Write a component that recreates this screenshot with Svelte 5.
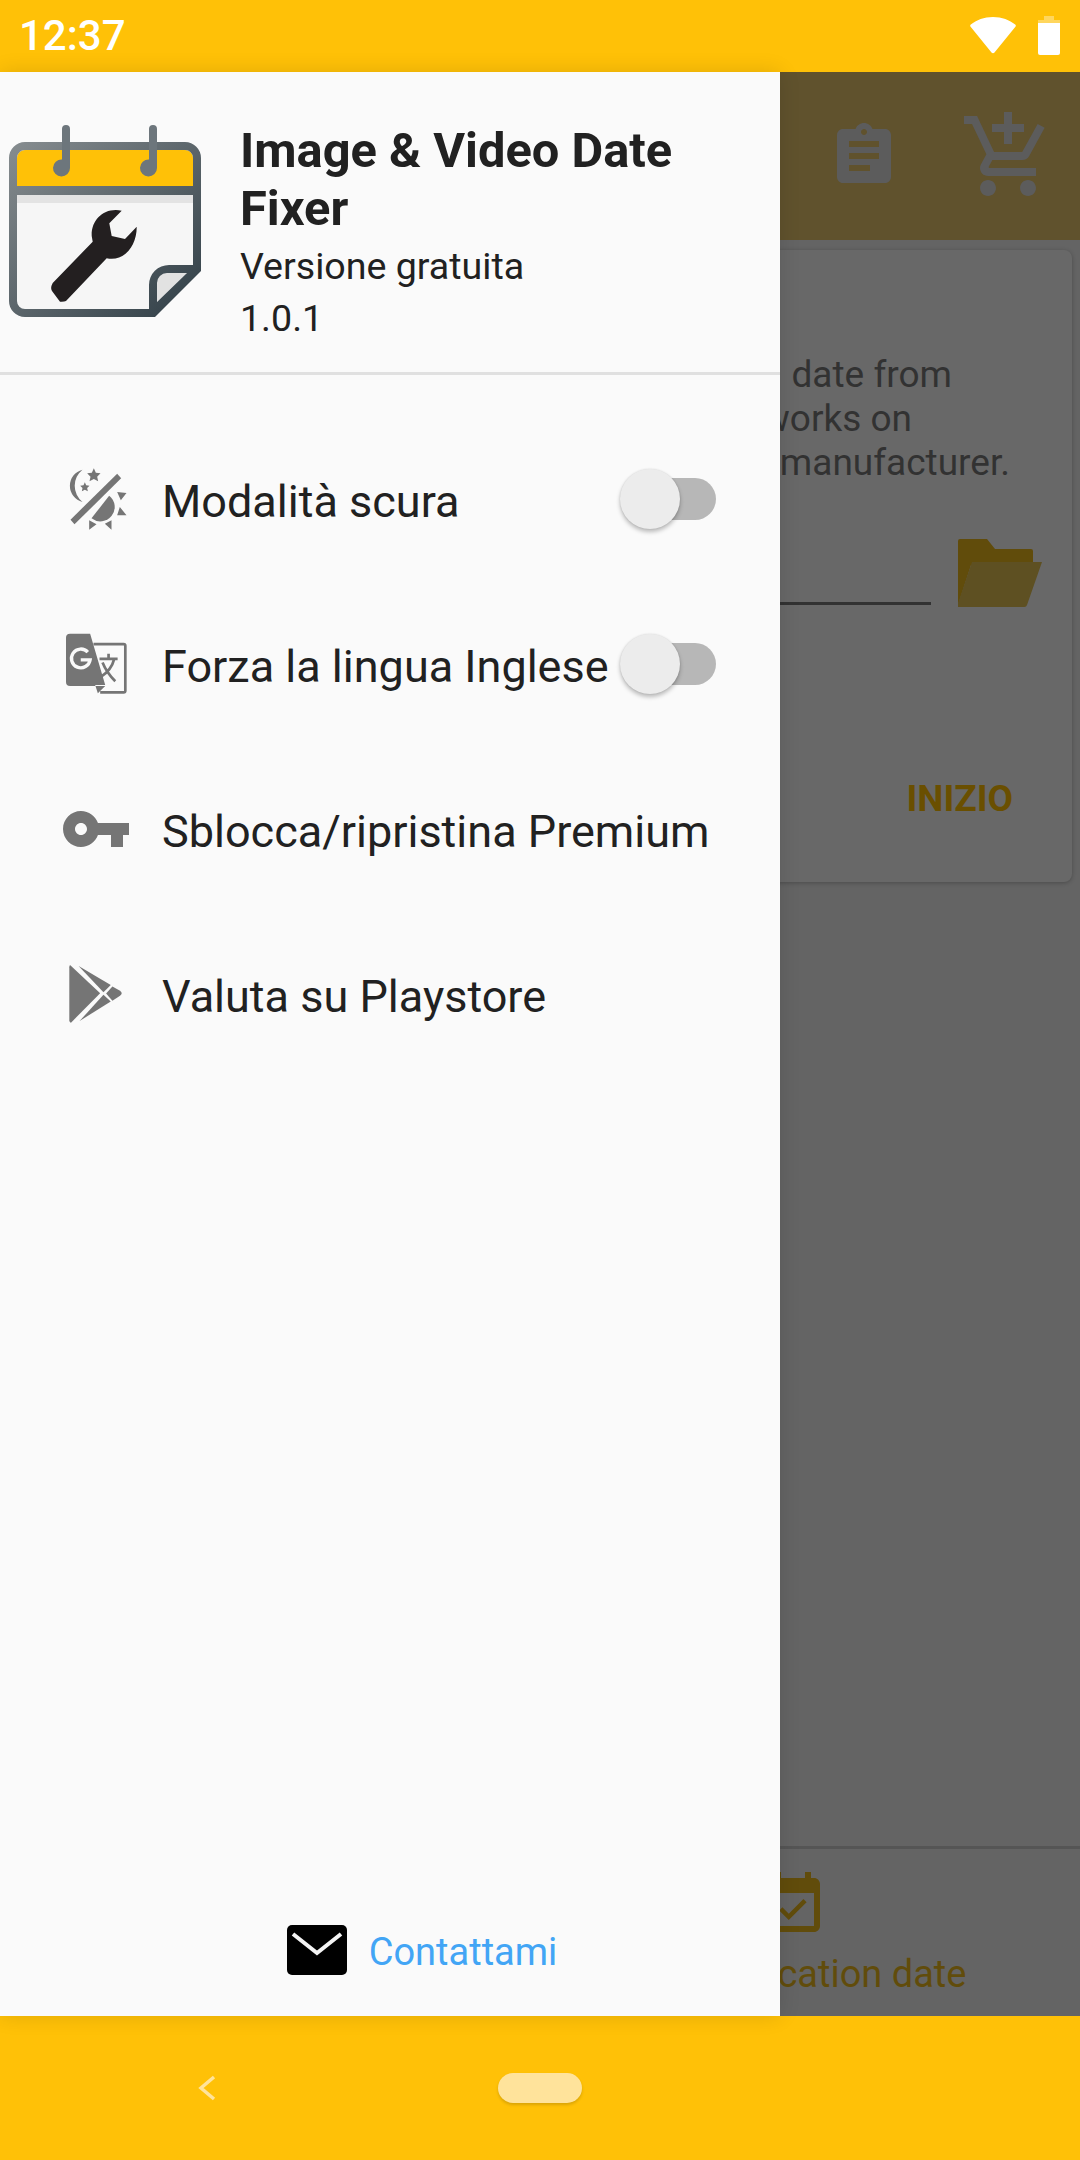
<script>
  const rows = [
    { label: 'Modalità scura', icon: 'moon', toggle: true },
    { label: 'Forza la lingua Inglese', icon: 'translate', toggle: true },
    { label: 'Sblocca/ripristina Premium', icon: 'key', toggle: false },
    { label: 'Valuta su Playstore', icon: 'play', toggle: false }
  ];
</script>

<div class="screen">
  <header class="status">
    <span class="time">12:37</span>
    <div class="status-icons">
      <svg class="wifi" viewBox="0 0 46 37" aria-hidden="true"><path d="M23 0C14 0 6.500 3 .8 7.500 0 8.300 0 9 .6 9.800L21.500 35.500c.8 1 2.200 1 3 0L45.400 9.800c.6-.8.6-1.500-.2-2.300C39.500 3 32 0 23 0z" fill="#fff"/></svg>
      <svg class="battery" viewBox="0 0 22 39" aria-hidden="true"><path d="M6 0h10v4h6v4H0V4h6z" fill="#fff" opacity=".35"/><path d="M0 7h22v30a2 2 0 0 1-2 2H2a2 2 0 0 1-2-2z" fill="#fff"/></svg>
    </div>
  </header>

  <main class="main">
    <div class="app">
      <div class="toolbar">
        <svg class="tool" viewBox="0 0 24 24" aria-hidden="true"><path d="M19 3h-4.180C14.400 1.840 13.300 1 12 1c-1.300 0-2.400.84-2.820 2H5c-1.100 0-2 .9-2 2v14c0 1.100.9 2 2 2h14c1.100 0 2-.9 2-2V5c0-1.100-.9-2-2-2zm-7 0c.55 0 1 .45 1 1s-.45 1-1 1-1-.45-1-1 .45-1 1-1zm2 14H7v-2h7v2zm3-4H7v-2h10v2zm0-4H7V7h10v2z"/></svg>
        <svg class="tool cart" viewBox="0 0 24 24" aria-hidden="true"><path d="M11 9h2V6h3V4h-3V1h-2v3H8v2h3v3zm-4 9c-1.100 0-1.990.9-1.990 2S5.900 22 7 22s2-.9 2-2-.9-2-2-2zm10 0c-1.100 0-1.990.9-1.990 2s.89 2 1.990 2 2-.9 2-2-.9-2-2-2zm-9.830-3.250l.03-.12.9-1.630h7.450c.75 0 1.410-.41 1.750-1.030l3.860-7.010L19.420 4h-.01l-1.100 2-2.760 5H8.530l-.13-.27L6.160 6l-.95-2-.94-2H1v2h2l3.600 7.590-1.350 2.450c-.16.28-.25.61-.25.96 0 1.100.9 2 2 2h12v-2H7.420c-.13 0-.25-.11-.25-.25z"/></svg>
      </div>
      <section class="card">
        <p class="desc l1">Change the media&nbsp;&nbsp;date from</p>
        <p class="desc l2">the file, it only works on</p>
        <p class="desc l3">files from the&nbsp;&nbsp;manufacturer.</p>
        <div class="path-row">
          <div class="field"></div>
          <svg class="folder" viewBox="0 0 84 68" aria-hidden="true">
            <path d="M2 0h27l8 10h36a2 2 0 0 1 2 2v14H13L0 66V2a2 2 0 0 1 2-2z" fill="#614c0b"/>
            <path d="M0 68V64L14 23H84L69 66a3 3 0 0 1-3 2z" fill="#5e5022"/>
          </svg>
        </div>
        <div class="action">INIZIO</div>
      </section>
      <div class="tabs">
        <div class="tab">
          <svg class="tab-icon" viewBox="0 0 24 24" aria-hidden="true"><path d="M16.530 11.060L15.470 10l-4.880 4.880-2.120-2.120-1.060 1.060L10.590 17l5.940-5.940zM19 3h-1V1h-2v2H8V1H6v2H5c-1.110 0-1.990.9-1.990 2L3 19c0 1.100.89 2 2 2h14c1.100 0 2-.9 2-2V5c0-1.100-.9-2-2-2zm0 16H5V8h14v11z"/></svg>
          <span class="tab-label">By modification date</span>
        </div>
      </div>
    </div>

    <aside class="drawer">
      <div class="head">
        <svg class="logo" viewBox="0 0 210 210" aria-hidden="true">
          <defs>
            <linearGradient id="frame" x1="0" y1="0" x2="1" y2="1">
              <stop offset="0" stop-color="#878d90"/>
              <stop offset="1" stop-color="#2f3d45"/>
            </linearGradient>
          </defs>
          <path d="M17 38a8 8 0 0 1 8-8h160a8 8 0 0 1 8 8v28H17z" fill="#ffc107"/>
          <path d="M17 75h176v70h-20l-24 44H25a8 8 0 0 1-8-8z" fill="#f6f6f6"/>
          <rect x="17" y="75" width="176" height="8" fill="#e3e3e3"/>
          <path d="M157 182v-19a10 10 0 0 1 10-10h20z" fill="#e2e2e2"/>
          <path fill-rule="evenodd" fill="url(#frame)" d="M9 38a16 16 0 0 1 16-16h160a16 16 0 0 1 16 16v113l-46 46H25a16 16 0 0 1-16-16zM17 38v28h176V38a8 8 0 0 0-8-8H25a8 8 0 0 0-8 8zM17 75v106a8 8 0 0 0 8 8h124v-24a20 20 0 0 1 20-20h24V75zM157 182l30-29h-20a10 10 0 0 0-10 10z"/>
          <path d="M62 9a4 4 0 0 1 8 0v39a8.500 8.500 0 1 1-8-8.500zM149 9a4 4 0 0 1 8 0v39a8.500 8.500 0 1 1-8-8.500z" fill="#6d767c"/>
          <path d="M121.700 90.700C104 87 91 100 91.700 116L92.700 121.700 52.700 163Q50 168 52 171L60 181.700Q64 182 66 181L106.700 138.300C125 142 137 125 136.700 106.700L125 119 111.700 116 109.300 103.300Z" fill="#231f20"/>
        </svg>
        <div class="head-text">
          <h1 class="title">Image &amp; Video Date Fixer</h1>
          <div class="sub first">Versione gratuita</div>
          <div class="sub">1.0.1</div>
        </div>
      </div>

      <nav class="menu">
        {#each rows as row}
          <div class="row">
            <span class="icon">
              {#if row.icon === 'moon'}
                <svg viewBox="70 80 200 195" width="67" height="65" aria-hidden="true">
                  <path d="M128 88A50 50 0 0 0 128 185A62 62 0 0 1 128 88z"/>
                  <path d="M162 84l6 13 14 2-10 10 3 14-13-7-13 7 3-14-10-10 14-2z"/>
                  <path d="M135 126l4 9 10 1-7 7 2 10-9-5-9 5 2-10-7-7 10-1z"/>
                  <path d="M92 238L232 100l12 14L104 252z"/>
                  <path d="M155 234L208 166A43 43 0 0 1 155 234z"/>
                  <path d="M232 155l28 3-17 22zM240 200l20 25h-28zM195 250l20-10v28zM148 240l22 12-22 16z"/>
                </svg>
              {:else if row.icon === 'translate'}
                <svg viewBox="75 580 185 185" width="62" height="62" aria-hidden="true">
                  <path d="M160 613h90a5 5 0 0 1 5 5v134a5 5 0 0 1-5 5h-70" fill="none" stroke="#757575" stroke-width="8"/>
                  <path d="M90 582h60l45 153-30 0 8 25 22-22H90a12 12 0 0 1-12-12V594a12 12 0 0 1 12-12z"/>
                  <path d="M143 637A28 28 0 1 0 150 660H122" fill="none" stroke="#fafafa" stroke-width="10"/>
                  <path d="M178 657h54M205 642v15M222 657c-6 24-22 42-40 54M187 668c8 20 22 40 38 56" fill="none" stroke="#757575" stroke-width="8"/>
                </svg>
              {:else if row.icon === 'key'}
                <svg viewBox="0 0 24 24" width="72" height="72" aria-hidden="true"><path d="M12.650 10C11.830 7.670 9.610 6 7 6c-3.310 0-6 2.690-6 6s2.690 6 6 6c2.610 0 4.830-1.670 5.650-4H17v4h4v-4h2v-4H12.650zM7 14c-1.100 0-2-.9-2-2s.9-2 2-2 2 .9 2 2-.9 2-2 2z"/></svg>
              {:else}
                <svg viewBox="80 550 175 185" width="58" height="62" aria-hidden="true">
                  <path d="M90 556Q87 555 87 562V722Q87 729 92 729L180 640z"/>
                  <path d="M115 558L212 615 190 637z"/>
                  <path d="M118 724L212 665 190 645z"/>
                  <path d="M217 620L240 633Q250 640 240 648L217 663 198 641z"/>
                </svg>
              {/if}
            </span>
            <span class="label">{row.label}</span>
            {#if row.toggle}
              <span class="switch"><span class="thumb"></span></span>
            {/if}
          </div>
        {/each}
      </nav>

      <div class="contact">
        <svg class="mail" viewBox="0 0 60 50" aria-hidden="true">
          <rect width="60" height="50" rx="5" fill="#000"/>
          <path d="M6 9L30 28 54 9" fill="none" stroke="#f4f4f4" stroke-width="4"/>
        </svg>
        <span class="contact-label">Contattami</span>
      </div>
    </aside>
  </main>

  <footer class="navbar">
    <svg class="back" viewBox="0 0 20 26" aria-hidden="true"><path d="M17 2L4 13l13 11" fill="none" stroke="#ffe39b" stroke-width="3.500"/></svg>
    <span class="pill"></span>
  </footer>
</div>

<style>
  :global(body) { margin: 0; }
  .screen {
    width: 1080px; height: 2160px; display: flex; flex-direction: column;
    font-family: Roboto, "Liberation Sans", sans-serif; overflow: hidden;
  }
  .status {
    height: 72px; flex: none; background: #ffc107; display: flex; align-items: center;
    justify-content: space-between; padding: 0 20px 0 19px; box-sizing: border-box;
  }
  .time { color: #fff; font-size: 42px; line-height: 72px; font-weight: 500; }
  .status-icons { display: flex; align-items: flex-start; gap: 22px; height: 72px; padding-top: 16px; box-sizing: border-box; }
  .wifi { width: 46px; height: 37px; margin-top: 1px; display: block; }
  .battery { width: 22px; height: 39px; display: block; }

  .main { flex: 1; position: relative; min-height: 0; }
  .app { height: 100%; display: flex; flex-direction: column; background: #646464; }
  .toolbar {
    height: 168px; flex: none; background: #60522d; display: flex; justify-content: flex-end;
    align-items: flex-start; padding: 36px 24px 0 0; gap: 60px; box-sizing: border-box;
  }
  .tool { fill: #5c5c5c; width: 72px; height: 72px; margin-top: 12px; display: block; }
  .cart { width: 96px; height: 96px; margin-top: 0; }
  .card {
    height: 632px; margin: 10px 8px 0; background: #686868; border-radius: 8px;
    box-shadow: 0 1px 4px rgba(0,0,0,.25); box-sizing: border-box; padding-top: 103px;
    flex: none;
  }
  .desc {
    margin: 0; font-size: 37px; line-height: 44px; color: #323232; text-align: right; white-space: nowrap;
  }
  .l1 { padding-right: 120px; }
  .l2 { padding-right: 160px; }
  .l3 { padding-right: 62px; }
  .path-row { display: flex; align-items: flex-end; padding: 0 30px 0 0; margin-top: 54px; justify-content: flex-end; gap: 27px; }
  .field { width: 900px; height: 3px; background: #323232; margin-bottom: 2px; }
  .folder { width: 84px; height: 68px; display: block; }
  .action { text-align: right; font-size: 37px; font-weight: 700; color: #6a4f00; padding-right: 59px; margin-top: 170px; }
  .tabs { margin-top: auto; height: 170px; border-top: 3px solid #555; box-sizing: border-box; padding-left: 506px; }
  .tab { display: flex; flex-direction: column; align-items: center; }
  .tab-icon { fill: #614c0b; width: 72px; height: 72px; margin-top: 20px; display: block; }
  .tab-label { color: #614c0b; font-size: 38px; line-height: 48px; margin-top: 9px; white-space: nowrap; }

  .drawer {
    position: absolute; left: 0; top: 0; bottom: 0; width: 780px; background: #fafafa;
    display: flex; flex-direction: column; box-shadow: 0 0 20px rgba(0,0,0,.12);
  }
  .head {
    height: 303px; flex: none; display: flex; box-sizing: border-box; border-bottom: 3px solid #e0e0e0;
  }
  .logo { width: 210px; height: 210px; flex: none; margin-top: 48px; display: block; }
  .head-text { padding: 50px 0 0 30px; color: #212121; }
  .title { margin: 0; font-size: 48.800px; line-height: 58px; font-weight: 700; color: #212121; }
  .sub { font-size: 37.600px; line-height: 52px; }
  .first { margin-top: 2px; }
  .menu { padding-top: 44px; }
  .row { height: 165px; display: flex; align-items: center; padding-right: 64px; box-sizing: border-box; }
  .icon { width: 162px; flex: none; display: flex; justify-content: center; padding: 0 0 5px 30px; box-sizing: border-box; }
  .icon svg { fill: #757575; display: block; }
  .label { font-size: 45px; color: #212121; white-space: nowrap; }
  .switch {
    margin: -5px 0 0 auto; width: 91px; height: 42px; border-radius: 21px; background: #b7b7b7; position: relative;
  }
  .thumb {
    position: absolute; left: -5px; top: -9px; width: 60px; height: 60px; border-radius: 50%; background: #ececec;
    box-shadow: 0 3px 4px rgba(0,0,0,.25), 0 0 2px rgba(0,0,0,.12);
  }
  .contact { margin-top: auto; display: flex; align-items: center; justify-content: center; gap: 22px; height: 132px; padding-left: 64px; }
  .mail { width: 60px; height: 50px; display: block; }
  .contact-label { color: #42a5f5; font-size: 38px; padding-top: 4px; }

  .navbar {
    height: 144px; flex: none; background: #ffc107; display: grid; grid-template-columns: 1fr 84px 1fr; align-items: center;
  }
  .back { width: 20px; height: 26px; margin-left: 197px; display: block; }
  .pill { grid-column: 2; height: 30px; border-radius: 15px; background: #ffe39b; box-shadow: 0 2px 3px rgba(0,0,0,.15); }
</style>
